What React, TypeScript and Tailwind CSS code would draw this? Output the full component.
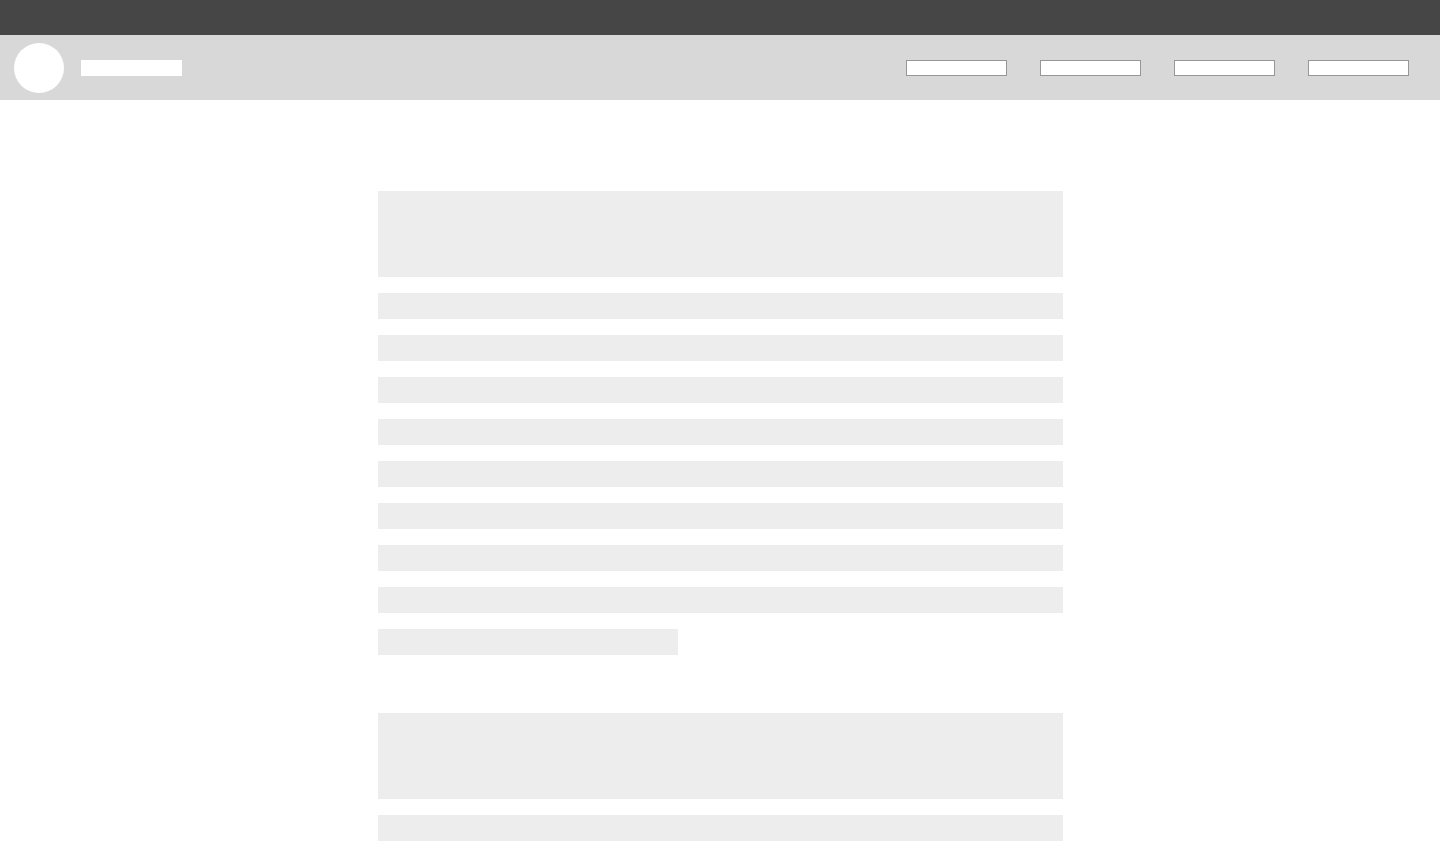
const navItems = ['first', 'second', 'third', 'fourth'];

type ArticleProps = { lines: number; shortEnding?: boolean };

function Article({ lines, shortEnding = false }: ArticleProps) {
  return (
    <article className="flex flex-col gap-4">
      <div className="h-[86px] bg-[#ededed]" />
      {Array.from({ length: lines }, (_, i) => (
        <div key={i} className="h-[26px] bg-[#ededed]" />
      ))}
      {shortEnding && <div className="h-[26px] w-[300px] max-w-full bg-[#ededed]" />}
    </article>
  );
}

export default function App() {
  return (
    <div className="min-h-screen bg-white">
      <div className="h-[35px] bg-[#464646]" />
      <header className="flex h-[65px] items-center justify-between bg-[#d8d8d8] pr-[31px] pl-[14px]">
        <div className="flex items-center gap-[17px]">
          <div className="size-[50px] rounded-full bg-white" />
          <div className="h-4 w-[101px] bg-white" />
        </div>
        <nav className="flex gap-[33px]">
          {navItems.map((item) => (
            <div key={item} className="h-4 w-[101px] border border-[#979797] bg-white" />
          ))}
        </nav>
      </header>
      <main className="mx-auto flex w-[685px] max-w-full flex-col gap-[58px] pt-[91px]">
        <Article lines={8} shortEnding />
        <Article lines={1} />
      </main>
    </div>
  );
}
